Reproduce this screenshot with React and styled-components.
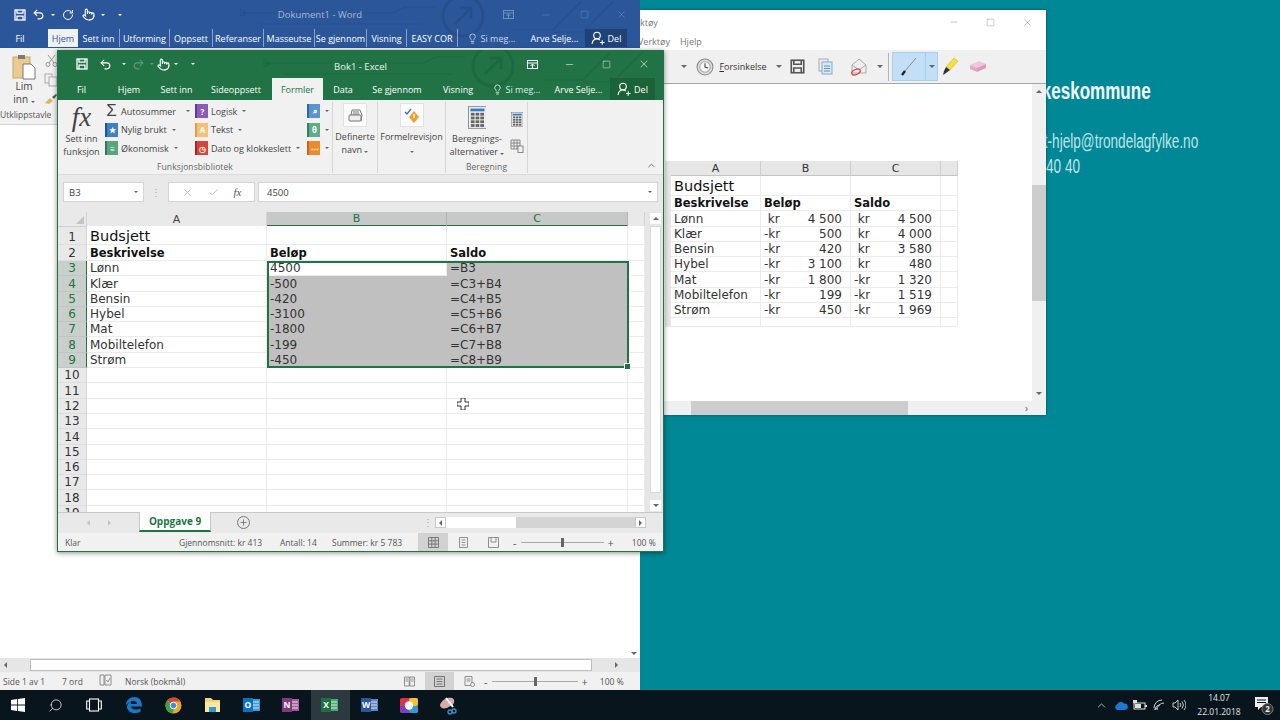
import React from 'react'
import styled, { createGlobalStyle } from 'styled-components'
import { Undo2, Redo2, RotateCw, Pointer, Lightbulb, X, Minus, Square, ChevronUp, Check, Plus, Search } from 'lucide-react'

const GREEN = '#217346'
const BLUE = '#2b579a'
const UI = '"Open Sans", "Noto Sans", sans-serif'
const SHEET = '"DejaVu Sans", Verdana, sans-serif'

const Global = createGlobalStyle`
    html, body { margin: 0; padding: 0; background: #018896; }
    * { box-sizing: border-box; }
`

const Desktop = styled.div`
    position: relative;
    width: 1280px;
    height: 720px;
    overflow: hidden;
    background: #018896;
    font-family: ${UI};
`
const Wallpaper = styled.div`
    display: flex;
    flex-direction: column;
    padding: 77px 0 0 1037px;
    font-family: "Liberation Sans", sans-serif;
`
const WallHeading = styled.div`
    font-size: 24px;
    font-weight: 700;
    line-height: 28px;
    color: #f4fbfb;
    margin-bottom: 24px;
    white-space: nowrap;
    transform: scaleX(0.71);
    transform-origin: left center;
`
const WallLine = styled.div`
    font-size: 20px;
    line-height: 25px;
    color: #bfe4e7;
    white-space: nowrap;
    margin-left: ${p => p.$ml || 0}px;
    transform: scaleX(0.68);
    transform-origin: left center;
`

/* ---------- windows ---------- */
const WordWindow = styled.div`
    position: absolute;
    left: 0;
    top: 0;
    width: 640px;
    height: 690px;
    display: flex;
    flex-direction: column;
    background: #fff;
    z-index: 2;
`
const ExcelWindow = styled.div`
    position: absolute;
    left: 57px;
    top: 50px;
    width: 607px;
    height: 502px;
    display: flex;
    flex-direction: column;
    background: #f1f1f1;
    border: 1px solid ${GREEN};
    border-top: 0;
    box-shadow: 0 1px 5px rgba(0,0,0,0.45);
    z-index: 3;
`
const SnipWindow = styled.div`
    position: absolute;
    left: 640px;
    top: 10px;
    width: 406px;
    height: 405px;
    display: flex;
    flex-direction: column;
    background: #fff;
    box-shadow: 0 0 3px rgba(0,0,0,0.4);
    z-index: 1;
`

/* ---------- office chrome ---------- */
const TitleBar = styled.div`
    position: relative;
    display: grid;
    grid-template-columns: 1fr auto 1fr;
    align-items: center;
    height: ${p => p.$h}px;
    flex: none;
`
const Qat = styled.div`
    display: flex;
    align-items: center;
    height: 100%;
    padding-left: ${p => p.$pad}px;
    color: ${p => p.$color || '#fff'};
`
const QatSlot = styled.span`
    width: ${p => p.$w}px;
    flex: none;
    display: flex;
    align-items: center;
    justify-content: center;
`
const DocTitle = styled.div`
    font-size: 9.5px;
    color: ${p => p.$color};
    white-space: nowrap;
    padding-top: ${p => p.$top || 0}px;
`
const WinControls = styled.div`
    display: flex;
    justify-content: flex-end;
    align-items: center;
    color: ${p => p.$color};
`
const WinControl = styled.div`
    width: ${p => p.$w}px;
    display: flex;
    justify-content: center;
    align-items: center;
`
const Circuit = styled.svg`
    position: absolute;
    right: 0;
    top: 0;
    pointer-events: none;
`
const TabRow = styled.div`
    display: flex;
    align-items: stretch;
    flex: none;
    height: ${p => p.$h}px;
    position: relative;
`
const Tab = styled.div`
    width: ${p => p.$w}px;
    flex: none;
    display: flex;
    align-items: center;
    justify-content: center;
    gap: 3px;
    font-size: ${p => p.$size || 9}px;
    white-space: nowrap;
    overflow: hidden;
    color: ${p => (p.$active ? p.$activeColor : p.$color || '#fff')};
    background: ${p => (p.$active ? '#f1f1f1' : p.$share ? p.$share : 'transparent')};
    border-right: ${p => (p.$sep ? '1px solid rgba(255,255,255,0.45)' : '0')};
`
const Caret = styled.span`
    display: inline-block;
    width: 0;
    height: 0;
    flex: none;
    margin-left: ${p => p.$ml ?? 2}px;
    border-left: 2px solid transparent;
    border-right: 2px solid transparent;
    border-top: 2px solid ${p => p.$color || '#666'};
`

/* ---------- word ---------- */
const WordHead = styled.div`
    background: ${BLUE};
    flex: none;
    height: 48px;
    display: flex;
    flex-direction: column;
`
const WordRibbon = styled.div`
    height: 77px;
    flex: none;
    background: #f1f1f1;
    border-bottom: 1px solid #d0d0d0;
    box-shadow: 0 1px 3px rgba(0,0,0,0.15);
`
const ClipGroup = styled.div`
    display: grid;
    grid-template-columns: 36px 18px;
    grid-template-rows: 1fr auto;
    width: 60px;
    height: 100%;
    padding: 6px 0 0 6px;
    font-size: 10px;
    line-height: 13px;
    color: #444;
`
const PasteButton = styled.div`
    display: flex;
    flex-direction: column;
    align-items: center;
`
const ClipTools = styled.div`
    display: flex;
    flex-direction: column;
    align-items: center;
    gap: 6px;
`
const ClipLabel = styled.div`
    grid-column: 1 / 3;
    margin: 0 0 3px -6px;
    font-size: 8.5px;
    color: #555;
    white-space: nowrap;
`
const WordBody = styled.div`
    flex: 1;
    display: flex;
    justify-content: flex-end;
    background: #fff;
`
const VScroll = styled.div`
    width: 13px;
    display: flex;
    flex-direction: column;
    justify-content: flex-end;
    align-items: center;
    padding-bottom: 3px;
    background: ${p => p.$bg || '#fff'};
`
const WordHScroll = styled.div`
    height: 14px;
    flex: none;
    display: flex;
    align-items: center;
    background: #e6e6e6;
    padding: 0 18px 0 4px;
`
const ScrollArrow = styled.span`
    flex: none;
    width: 0;
    height: 0;
    border-top: 3px solid transparent;
    border-bottom: 3px solid transparent;
    ${p => (p.$dir === 'left' ? 'border-right: 3px solid #666;' : 'border-left: 3px solid #666;')}
`
const ArrowDown = styled.span`
    width: 0;
    height: 0;
    flex: none;
    border-left: 3px solid transparent;
    border-right: 3px solid transparent;
    border-${p => (p.$up ? 'bottom' : 'top')}: 3px solid #666;
`
const WordThumb = styled.div`
    flex: none;
    width: 562px;
    height: 12px;
    margin: 0 23px 0 23px;
    background: #fff;
    border: 1px solid #bdbdbd;
`
const StatusBar = styled.div`
    height: ${p => p.$h}px;
    flex: none;
    display: flex;
    align-items: center;
    background: #f1f1f1;
    font-size: 8.5px;
    color: #555;
    padding-left: ${p => p.$pad}px;
    white-space: nowrap;
`
const StatusText = styled.span`
    width: ${p => p.$w}px;
    flex: none;
`
const ViewButton = styled.div`
    width: ${p => p.$w}px;
    height: 100%;
    flex: none;
    display: flex;
    align-items: center;
    justify-content: center;
    background: ${p => (p.$active ? '#d2d2d2' : 'transparent')};
`
const ZoomSlider = styled.div`
    width: ${p => p.$w}px;
    flex: none;
    height: 1px;
    background: #aaa;
    position: relative;
    margin: 0 4px;
`
const ZoomThumb = styled.span`
    position: absolute;
    left: 50%;
    top: -4px;
    width: 3px;
    height: 9px;
    margin-left: -1px;
    background: #666;
`
const ZoomSign = styled.span`
    font-size: 11px;
    line-height: 1;
    color: #555;
    flex: none;
`

/* ---------- excel ribbon ---------- */
const ExcelHead = styled.div`
    background: ${GREEN};
    flex: none;
`
const Ribbon = styled.div`
    display: flex;
    height: 75px;
    flex: none;
    position: relative;
    background: #f1f1f1;
    border-bottom: 1px solid #dcdcdc;
    color: #444;
    font-size: 9px;
`
const Group = styled.div`
    width: ${p => p.$w}px;
    flex: none;
    display: flex;
    flex-direction: column;
    border-right: 1px solid #d6d6d6;
    margin: 2px 0 1px;
`
const GroupBody = styled.div`
    flex: 1;
    display: flex;
    min-height: 0;
`
const GroupLabel = styled.div`
    height: 12px;
    flex: none;
    text-align: center;
    font-size: 8.5px;
    line-height: 12px;
    color: #666;
    letter-spacing: 0.1px;
`
const BigButton = styled.div`
    width: ${p => p.$w}px;
    flex: none;
    display: flex;
    flex-direction: column;
    align-items: center;
    padding-top: ${p => p.$top ?? 1}px;
    line-height: 13px;
    text-align: center;
    white-space: nowrap;
    color: #444;
`
const FxGlyph = styled.div`
    font-family: "Liberation Serif", serif;
    font-style: italic;
    font-size: 27px;
    line-height: 28px;
    color: #444;
    margin-bottom: 1px;
`
const IconBox = styled.div`
    width: 24px;
    height: 24px;
    background: #fbfbfb;
    border: 1px solid #e2e2e2;
    display: flex;
    align-items: center;
    justify-content: center;
    margin-bottom: 3px;
`
const SmallColumn = styled.div`
    display: flex;
    flex-direction: column;
    width: ${p => p.$w}px;
    flex: none;
    padding-top: 1px;
    gap: 2.5px;
`
const SmallItem = styled.div`
    height: 16px;
    display: flex;
    align-items: center;
    gap: 3px;
    white-space: nowrap;
`
const SideIcon = styled.div`
    height: 16px;
    margin-top: 8px;
    display: flex;
    align-items: center;
    justify-content: center;
`
const Book = styled.span`
    width: 13px;
    height: 14px;
    flex: none;
    display: inline-flex;
    align-items: center;
    justify-content: center;
    background: ${p => p.$color};
    border-left: 2px solid ${p => p.$dark};
    font-size: 8px;
    font-weight: 700;
    color: #fff;
`
const Sigma = styled.span`
    width: 13px;
    flex: none;
    text-align: center;
    font-size: 17px;
    line-height: 14px;
    color: #444;
    font-family: "Liberation Sans", sans-serif;
`
const Collapse = styled.div`
    position: absolute;
    right: 6px;
    bottom: 3px;
    color: #666;
    display: flex;
`

/* ---------- formula bar ---------- */
const FormulaBar = styled.div`
    height: 37px;
    flex: none;
    display: flex;
    align-items: flex-start;
    padding: 7px 5px 0 5px;
    background: #e9e9e9;
    font-size: 9.5px;
    color: #444;
`
const NameBox = styled.div`
    width: 81px;
    height: 20px;
    flex: none;
    background: #fff;
    border: 1px solid #d4d4d4;
    display: flex;
    align-items: center;
    justify-content: space-between;
    padding: 0 5px;
`
const Dots = styled.div`
    width: 24px;
    flex: none;
    height: 20px;
    display: flex;
    align-items: center;
    justify-content: center;
    color: #aaa;
`
const FxBox = styled.div`
    width: 87px;
    height: 20px;
    flex: none;
    background: #fff;
    border: 1px solid #d4d4d4;
    display: flex;
    align-items: center;
    justify-content: space-around;
    padding: 0 5px;
    color: #bbb;
`
const SmallFx = styled.span`
    font-family: "Liberation Serif", serif;
    font-style: italic;
    font-size: 11px;
    color: #555;
`
const FormulaInput = styled.div`
    flex: 1;
    height: 20px;
    margin-left: 3px;
    background: #fff;
    border: 1px solid #d4d4d4;
    display: flex;
    align-items: center;
    justify-content: space-between;
    padding: 0 5px 0 8px;
`

/* ---------- sheet ---------- */
const SheetArea = styled.div`
    flex: 1;
    display: flex;
    min-height: 0;
    background: #fff;
`
const Sheet = styled.div`
    width: 587px;
    flex: none;
    position: relative;
    overflow: hidden;
    font-family: ${SHEET};
    font-size: 12px;
    color: #333;
`
const HeaderRow = styled.div`
    display: grid;
    grid-template-columns: 29px 180px 180px 181px 1fr;
    height: 14px;
`
const Corner = styled.div`
    background: #e9e9e9;
    border-right: 1px solid #d4d4d4;
    border-bottom: 1px solid #cfcfcf;
    position: relative;
    &::after {
        content: '';
        position: absolute;
        right: 2px;
        bottom: 2px;
        border-left: 8px solid transparent;
        border-bottom: 8px solid #c4c4c4;
    }
`
const ColHead = styled.div`
    display: flex;
    align-items: center;
    justify-content: center;
    font-size: 11px;
    background: ${p => (p.$on ? '#c6c9c7' : '#e9e9e9')};
    color: ${p => (p.$on ? GREEN : '#444')};
    border-right: 1px solid ${p => (p.$on ? '#b5b5b5' : '#d4d4d4')};
    border-bottom: ${p => (p.$on ? `2px solid ${GREEN}` : '1px solid #cfcfcf')};
`
const SheetRow = styled.div`
    display: grid;
    grid-template-columns: 29px 180px 180px 181px 1fr;
    height: ${p => p.$h}px;
`
const RowHead = styled.div`
    display: flex;
    align-items: flex-end;
    justify-content: center;
    font-size: 12px;
    line-height: 14px;
    background: ${p => (p.$on ? '#c9d0cb' : '#e9e9e9')};
    color: ${p => (p.$on ? GREEN : '#333')};
    border-right: ${p => (p.$on ? `1px solid ${GREEN}` : '1px solid #d4d4d4')};
    border-bottom: 1px solid ${p => (p.$on ? '#c0c6c2' : '#dedede')};
`
const Cell = styled.div`
    display: flex;
    align-items: flex-end;
    padding: 0 3px 0 3px;
    line-height: 14px;
    white-space: nowrap;
    overflow: hidden;
    font-size: ${p => (p.$big ? '14.5px' : p.$bold ? '11.5px' : '12px')};
    ${p => p.$big && 'line-height: 16px;'}
    font-weight: ${p => (p.$bold ? 700 : 400)};
    color: ${p => (p.$bold || p.$big ? '#111' : '#333')};
    background: ${p => (p.$fill ? '#c0c0c0' : '#fff')};
    border-right: 1px solid ${p => (p.$fill ? '#c0c0c0' : '#ebebeb')};
    border-bottom: 1px solid ${p => (p.$fill ? '#c0c0c0' : '#ebebeb')};
`
const Selection = styled.div`
    position: absolute;
    left: 209px;
    top: 49px;
    width: 362px;
    height: 107px;
    border: 2px solid ${GREEN};
    pointer-events: none;
    &::after {
        content: '';
        position: absolute;
        right: -4px;
        bottom: -4px;
        width: 5px;
        height: 5px;
        background: ${GREEN};
        border: 1px solid #fff;
    }
`
const CursorMark = styled.svg`
    position: absolute;
    left: 399px;
    top: 186px;
`
const ExcelVScroll = styled.div`
    flex: 1;
    display: flex;
    flex-direction: column;
    align-items: center;
    background: #e6e6e6;
    padding: 1px 1px 1px 4px;
`
const ExcelVButton = styled.div`
    width: 11px;
    height: 11px;
    flex: none;
    background: #fff;
    display: flex;
    align-items: center;
    justify-content: center;
`
const ExcelVThumb = styled.div`
    width: 11px;
    flex: 1;
    background: #fdfdfd;
    border: 1px solid #d8d8d8;
    margin: 2px 0 7px;
`

/* ---------- sheet tabs ---------- */
const SheetTabs = styled.div`
    height: 21px;
    flex: none;
    display: flex;
    align-items: flex-start;
    background: #e9e9e9;
    border-top: 1px solid #c8c8c8;
    color: #bbb;
`
const TabNav = styled.div`
    width: 81px;
    flex: none;
    height: 100%;
    display: flex;
    align-items: center;
    justify-content: center;
    gap: 18px;
`
const NavArrow = styled.span`
    width: 0;
    height: 0;
    border-top: 3px solid transparent;
    border-bottom: 3px solid transparent;
    ${p => (p.$dir === 'left' ? 'border-right: 3px solid #c4c4c4;' : 'border-left: 3px solid #c4c4c4;')}
`
const SheetTab = styled.div`
    width: 72px;
    height: 20px;
    margin-top: -1px;
    flex: none;
    display: flex;
    align-items: center;
    justify-content: center;
    background: #fff;
    border: 1px solid #c8c8c8;
    border-top: 0;
    border-bottom: 2px solid ${GREEN};
    color: ${GREEN};
    font-size: 10px;
    font-weight: 700;
    white-space: nowrap;
`
const AddSheet = styled.div`
    width: 13px;
    height: 13px;
    margin: 3px 0 0 26px;
    flex: none;
    border: 1px solid #777;
    border-radius: 50%;
    color: #666;
    display: flex;
    align-items: center;
    justify-content: center;
`
const SplitDots = styled.div`
    margin: 1px 0 0 173px;
    width: 12px;
    flex: none;
    color: #aaa;
    font-size: 10px;
    line-height: 16px;
`
const HBar = styled.div`
    width: 211px;
    flex: none;
    margin: 4px 0 0 0;
    height: 11px;
    display: flex;
    align-items: stretch;
    background: #d4d4d4;
`
const HBarButton = styled.div`
    width: 11px;
    flex: none;
    background: #fff;
    border: 1px solid #c8c8c8;
    display: flex;
    align-items: center;
    justify-content: center;
`
const HBarThumb = styled.div`
    width: 70px;
    flex: none;
    background: #fff;
`
const HBarRest = styled.span`
    flex: 1;
`

/* ---------- snipping tool ---------- */
const SnipTitle = styled.div`
    height: 23px;
    flex: none;
    display: flex;
    align-items: center;
    justify-content: space-between;
    font-size: 9px;
    color: #777;
    padding-top: 1px;
`
const SnipMenu = styled.div`
    height: 17px;
    flex: none;
    display: flex;
    align-items: center;
    gap: 10px;
    font-size: 9px;
    color: #777;
    margin-left: -2px;
`
const SnipTools = styled.div`
    height: 34px;
    flex: none;
    display: flex;
    align-items: center;
    background: #f0f0f0;
    border-bottom: 1px solid #a6a6a6;
    font-size: 9px;
    color: #333;
`
const ToolSlot = styled.div`
    width: ${p => p.$w}px;
    flex: none;
    display: flex;
    align-items: center;
    justify-content: center;
    white-space: nowrap;
`
const PenButton = styled.div`
    width: 46px;
    height: 29px;
    flex: none;
    display: flex;
    background: #c3dff5;
    border: 1px solid #a8d0ee;
`
const PenPart = styled.div`
    width: ${p => p.$w}px;
    flex: none;
    display: flex;
    align-items: center;
    justify-content: center;
    border-left: ${p => (p.$sep ? '1px solid #a8d0ee' : '0')};
`
const ToolSep = styled.div`
    width: 1px;
    height: 28px;
    background: #b4b4b4;
    flex: none;
    margin: 0 3px 0 1px;
`
const SnipBody = styled.div`
    flex: 1;
    display: flex;
    min-height: 0;
`
const SnipCanvas = styled.div`
    flex: 1;
    padding: 77px 0 0 25px;
    background: #fff;
`
const SnipScroll = styled.div`
    width: 14px;
    flex: none;
    display: flex;
    flex-direction: column;
    align-items: center;
    background: #f0f0f0;
    padding: 6px 0;
`
const SnipThumb = styled.div`
    width: 100%;
    height: 116px;
    margin: 92px 0 auto;
    background: #cdcdcd;
`
const SnipHBar = styled.div`
    height: 14px;
    flex: none;
    display: flex;
    align-items: stretch;
    background: #f0f0f0;
`
const SnipHThumb = styled.div`
    width: 217px;
    margin-left: 51px;
    background: #cdcdcd;
`
const SnipHEnd = styled.div`
    flex: 1;
    display: flex;
    justify-content: flex-end;
    align-items: center;
    padding-right: 18px;
`
const ChevronText = styled.span`
    font-size: 10px;
    line-height: 1;
    color: #555;
`
const ShotGrid = styled.div`
    display: grid;
    grid-template-columns: 6px 90px 90px 90px 17px;
    font-family: ${SHEET};
    font-size: 12px;
    color: #333;
`
const ShotHead = styled.div`
    height: 15px;
    display: flex;
    align-items: center;
    justify-content: center;
    font-size: 11px;
    background: #e6e6e6;
    border-right: 1px solid #cfcfcf;
    border-bottom: 1px solid #c4c4c4;
`
const ShotStub = styled.div`
    background: #e6e6e6;
    height: ${p => p.$h}px;
`
const ShotCell = styled.div`
    height: ${p => p.$h}px;
    display: flex;
    align-items: flex-end;
    justify-content: ${p => (p.$money ? 'space-between' : 'flex-start')};
    padding: 0 8px 0 3px;
    line-height: 13px;
    white-space: pre;
    font-size: ${p => (p.$big ? '14.5px' : p.$bold ? '11.5px' : '12px')};
    ${p => p.$big && 'line-height: 18px;'}
    font-weight: ${p => (p.$bold ? 700 : 400)};
    color: ${p => (p.$bold || p.$big ? '#111' : '#333')};
    border-right: 1px solid #ebebeb;
    border-bottom: 1px solid #ebebeb;
`

/* ---------- taskbar ---------- */
const Taskbar = styled.div`
    position: absolute;
    left: 0;
    bottom: 0;
    width: 100%;
    height: 30px;
    display: flex;
    align-items: stretch;
    background: #08151c;
    color: #e8e8e8;
    z-index: 4;
`
const TaskCell = styled.div`
    width: ${p => p.$w || 39.3}px;
    flex: none;
    display: flex;
    align-items: center;
    justify-content: center;
    background: ${p => (p.$active ? '#2c393f' : 'transparent')};
`
const MirrorSearch = styled(Search)`
    transform: scaleX(-1);
`
const Tray = styled.div`
    margin-left: auto;
    display: flex;
    align-items: center;
`
const TrayIcon = styled.div`
    width: 19.5px;
    display: flex;
    align-items: center;
    justify-content: center;
`
const Clock = styled.div`
    width: 56px;
    text-align: center;
    font-size: 8.5px;
    line-height: 14px;
    color: #e4e4e4;
    margin-left: 2px;
`
const Notify = styled.div`
    width: 33px;
    height: 100%;
    display: flex;
    align-items: center;
    justify-content: center;
`

/* ---------- icons ---------- */
const Floppy = ({ color = '#fff', size = 12 }) => (
    <svg width={size} height={size} viewBox="0 0 12 12" fill="none" stroke={color} strokeWidth="1.3">
        <rect x="1" y="1" width="10" height="10" />
        <path d="M3 1v3.2h6V1M3 11V7.2h6V11" />
    </svg>
)
const ShareUser = ({ color = '#fff' }) => (
    <svg width="14" height="14" viewBox="0 0 14 14" fill="none" stroke={color} strokeWidth="1.1">
        <circle cx="6" cy="4.5" r="3.3" />
        <path d="M1 13c.4-3 2.4-5 5-5 1 0 2 .3 2.8 1M9 11.5h4.5M11.2 9.3v4.4" />
    </svg>
)
const RibbonDisplay = ({ color }) => (
    <svg width="11" height="9" viewBox="0 0 11 9" fill="none" stroke={color}>
        <rect x=".5" y=".5" width="10" height="8" />
        <path d="M.5 3h10M5.500 8V4M3.500 6l2-2 2 2" />
    </svg>
)
const CircuitArt = ({ w, ring, color }) => (
    <Circuit width={w} height="48" viewBox={`0 0 ${w} 48`} fill="none" stroke={color} strokeWidth="1.2">
        <circle cx={ring} cy="16" r="20" strokeWidth="3" />
        <path d={`M${ring - 8} 24L${ring + 8} 8M${ring - 3} 8h11v11`} strokeWidth="3" />
        <path d={`M0 13h${ring - 70}l12 -6h30M${ring + 50} 30h40l28 -28M${ring + 90} 32h30l30 -30M20 24h${ring - 60}`} />
        <circle cx="2" cy="13" r="3" />
    </Circuit>
)
const Clipboard = () => (
    <svg width="24" height="26" viewBox="0 0 24 26">
        <rect x="1" y="3" width="17" height="21" fill="#eccb93" stroke="#c9a66b" />
        <rect x="6" y="1" width="7" height="4" fill="#7a7a7a" />
        <path d="M11 10h8l4 4v11H11z" fill="#fff" stroke="#777" />
    </svg>
)
const Scissors = () => (
    <svg width="13" height="13" viewBox="0 0 13 13" fill="none" stroke="#999" strokeWidth="1">
        <circle cx="3" cy="10.5" r="2" /><circle cx="10" cy="10.5" r="2" />
        <path d="M4 9L10 1M9 9L3 1" />
    </svg>
)
const DocIcon = () => (
    <svg width="14" height="14" viewBox="0 0 14 14" fill="none" stroke="#aaa">
        <rect x="1" y="1" width="7" height="9" /><rect x="5" y="4" width="8" height="9" fill="#f1f1f1" />
    </svg>
)
const Brush = () => (
    <svg width="14" height="12" viewBox="0 0 14 12">
        <path d="M1 10l5-5 3 3-4 3z" fill="#e0b25e" /><path d="M8 4l4-3 1 1-3 4z" fill="#555" />
    </svg>
)
const NameIcon = () => (
    <svg width="17" height="17" viewBox="0 0 17 17" fill="none" stroke="#777">
        <rect x="2" y="8" width="12" height="6" rx="1" fill="#eee" />
        <path d="M4 8l1-5h8l2 5-1 6" /><path d="M6 5h6M5.500 7h7" />
    </svg>
)
const AuditIcon = () => (
    <svg width="18" height="18" viewBox="0 0 18 18">
        <path d="M2 6l2 2 4-5" fill="none" stroke="#3a78c2" strokeWidth="1.5" />
        <path d="M11 5l5 6-5 6-5-6z" fill="#f0a030" />
        <rect x="10.400" y="8" width="1.300" height="4" fill="#fff" />
    </svg>
)
const CalcIcon = ({ size = 24 }) => (
    <svg width={size * 0.82} height={size} viewBox="0 0 20 24">
        <rect x=".5" y=".5" width="19" height="23" fill="#f4f4f4" stroke="#888" />
        <rect x="2.500" y="2.500" width="15" height="3" fill="#3a78c2" />
        {[8, 12, 16, 20].map(y => [3, 8, 13].map(x => <rect key={x + '-' + y} x={x} y={y - 1} width="4" height="3" fill="#666" />))}
    </svg>
)
const SheetCalc = () => (
    <svg width="14" height="14" viewBox="0 0 14 14" fill="none" stroke="#888">
        <path d="M1 1h9v9H1zM1 4h9M1 7h9M4 1v9M7 1v9" /><rect x="8" y="7" width="5" height="6.500" fill="#f1f1f1" />
    </svg>
)
const GridIcon = ({ color = '#666' }) => (
    <svg width="11" height="11" viewBox="0 0 11 11" fill="none" stroke={color} strokeWidth=".8">
        <path d="M.5.5h10v10H.5zM.5 3.800h10M.5 7.100h10M3.800.5v10M7.100.5v10" />
    </svg>
)
const PageIcon = ({ color = '#777' }) => (
    <svg width="11" height="11" viewBox="0 0 11 11" fill="none" stroke={color} strokeWidth=".8">
        <path d="M1.500.5h8v10h-8zM3.500 3h4M3.500 5.500h4M3.500 8h4" />
    </svg>
)
const BreakIcon = () => (
    <svg width="11" height="11" viewBox="0 0 11 11" fill="none" stroke="#777" strokeWidth=".8">
        <path d="M.5.5h10v10H.5zM3 .5v4.500h5V.5" />
    </svg>
)
const ReadIcon = () => (
    <svg width="11" height="11" viewBox="0 0 11 11" fill="none" stroke="#777" strokeWidth=".8">
        <path d="M.5 1h4.700v9H.5zM5.800 1h4.700v9H5.800zM1.500 3h2.500M1.500 5h2.500M7 3h2.500M7 5h2.500" />
    </svg>
)
const LinesIcon = () => (
    <svg width="11" height="11" viewBox="0 0 11 11" fill="none" stroke="#666" strokeWidth=".9">
        <path d="M.5.5h10v10H.5zM2.500 3h6M2.500 5.500h6M2.500 8h6" />
    </svg>
)
const WebIcon = () => (
    <svg width="11" height="11" viewBox="0 0 11 11" fill="none" stroke="#777" strokeWidth=".8">
        <path d="M1 .5h7v9H1zM2.500 3h4M2.500 5h4" /><circle cx="8.500" cy="8.500" r="2" fill="#f1f1f1" />
    </svg>
)
const ProofIcon = () => (
    <svg width="13" height="12" viewBox="0 0 13 12" fill="none" stroke="#777" strokeWidth=".8">
        <path d="M1 1h4v10H1zM6 1h6v10H6zM7.500 6l1.500 2 2-4" />
    </svg>
)
const Clock3d = () => (
    <svg width="18" height="18" viewBox="0 0 17 17">
        <circle cx="8.500" cy="8.500" r="7.500" fill="#dcdcdc" stroke="#888" />
        <circle cx="8.500" cy="8.500" r="5" fill="#f6f6f6" stroke="#aaa" />
        <path d="M8.500 5v3.500l3 1" fill="none" stroke="#444" />
    </svg>
)
const CopyPage = () => (
    <svg width="15" height="17" viewBox="0 0 15 17" fill="none">
        <rect x="1" y="1" width="9" height="12" fill="#eee" stroke="#aaa" />
        <rect x="4" y="4" width="10" height="12" fill="#dcebf8" stroke="#7fa7cc" />
        <path d="M6 8h6M6 10.500h6M6 13h6" stroke="#5b8fc0" />
    </svg>
)
const SendMail = () => (
    <svg width="19" height="19" viewBox="0 0 19 19" fill="none">
        <path d="M2 8l7-6 7 6v8H2z" fill="#eee" stroke="#aaa" />
        <path d="M2 8l7 5 7-5" stroke="#aaa" />
        <ellipse cx="6" cy="15" rx="4.500" ry="2.500" transform="rotate(-25 6 15)" stroke="#d5404a" strokeWidth="1.200" />
    </svg>
)
const Pen = () => (
    <svg width="20" height="22" viewBox="0 0 20 22" fill="none">
        <path d="M17 2L6 15" stroke="#777" strokeWidth=".8" />
        <path d="M6 15l-3 4" stroke="#222" strokeWidth="2.400" />
    </svg>
)
const Marker = () => (
    <svg width="17" height="20" viewBox="0 0 17 20">
        <path d="M12 1l4 3-8 9-4-3z" fill="#f6e13c" stroke="#c2ad22" strokeWidth=".5" />
        <path d="M4 10l4 3-4 3-3 2 1-4z" fill="#333" />
    </svg>
)
const Eraser = () => (
    <svg width="18" height="13" viewBox="0 0 18 13">
        <path d="M1 5l9-4 7 3-9 4z" fill="#f1c5dc" />
        <path d="M1 5l7 3v4L1 9z" fill="#e2a8c8" /><path d="M8 8l9-4v4l-9 4z" fill="#d99bbd" />
    </svg>
)

const WindowsLogo = () => (
    <svg width="14" height="14" viewBox="0 0 14 14" fill="#fff">
        <path d="M0 2l6-.9V6.600H0zM6.800 1L14 0v6.600H6.800zM0 7.400h6v5.500L0 12zM6.800 7.400H14V14l-7.200-1z" />
    </svg>
)
const TaskView = () => (
    <svg width="16" height="14" viewBox="0 0 16 14" fill="none" stroke="#fff" strokeWidth="1.100">
        <rect x="3.500" y="1" width="9" height="12" /><path d="M3 3H.7v8H3M13 3h2.300v8H13" />
    </svg>
)
const Edge = () => (
    <svg width="18" height="18" viewBox="0 0 18 18" fill="none">
        <path d="M1 9c0-5 4-8 8-8 5 0 8 3 8 9.500H6c.3 3 5 4.300 9.500 1.700v3.600C10 18.800 1.500 17 2 10 3 7 5 6 6 6c0 0-.3 2 0 2h6c0-3.500-5-5-11 1z" fill="#1a78c8" />
    </svg>
)
const Chrome = () => (
    <svg width="17" height="17" viewBox="0 0 17 17">
        <circle cx="8.500" cy="8.500" r="8" fill="#e9a825" />
        <path d="M8.500.5a8 8 0 0 1 7 4H8.500a4 4 0 0 0-3.500 2L2.600 3A8 8 0 0 1 8.500.5z" fill="#d8443a" />
        <path d="M2.600 3L6 9c.8 1.400 2 2 3.500 2l-2.300 5.400A8 8 0 0 1 2.600 3z" fill="#3f9e50" />
        <circle cx="8.500" cy="8.500" r="3.300" fill="#4a8be0" stroke="#fff" />
    </svg>
)
const Folder = () => (
    <svg width="17" height="16" viewBox="0 0 17 16">
        <path d="M1 1h6l2 2h7v12H1z" fill="#f3d27c" />
        <rect x="1" y="5" width="15" height="10" fill="#fbe6a2" />
        <rect x="5" y="10" width="7" height="5" fill="#2f9bd6" />
    </svg>
)
const AppTile = ({ bg, page, letter }) => (
    <svg width="18" height="16" viewBox="0 0 18 16">
        <rect x="8" y="2" width="9" height="12" fill={page} />
        <path d="M10 5h6M10 8h6M10 11h6" stroke="#fff" strokeWidth=".8" />
        <rect x="0" y="1" width="10" height="14" fill={bg} />
        <text x="5" y="11" textAnchor="middle" fontSize="8.500" fontWeight="700" fill="#fff" fontFamily="Open Sans, sans-serif">{letter}</text>
    </svg>
)
const ColorApp = () => (
    <svg width="18" height="15" viewBox="0 0 18 15">
        <rect width="18" height="15" rx="2" fill="#d8334a" />
        <rect x="9" width="9" height="8" rx="2" fill="#f2c230" /><rect y="8" width="9" height="7" rx="2" fill="#7a3fc0" />
        <rect x="9" y="8" width="9" height="7" rx="2" fill="#2f9bd6" /><circle cx="9" cy="7.500" r="4.200" fill="#fff" />
    </svg>
)
const Snip = () => (
    <svg width="18" height="19" viewBox="0 0 18 19" fill="none">
        <path d="M1 9c2-6 8-8 12-7 3 1 3 5 0 7l-5 3C4 13 1 12 1 9z" fill="#d9a9a5" />
        <path d="M7 2l7 9" stroke="#fff" strokeWidth="2" />
        <circle cx="11" cy="16" r="2" stroke="#3a8fd0" strokeWidth="1.300" /><circle cx="15" cy="15" r="2" stroke="#3a8fd0" strokeWidth="1.300" />
    </svg>
)
const Cloud = () => (
    <svg width="14" height="9" viewBox="0 0 14 9"><path d="M3 9a3 3 0 0 1 0-5.500 4 4 0 0 1 7-1A3.200 3.200 0 0 1 11 9z" fill="#1c78d0" /></svg>
)
const Battery = () => (
    <svg width="14" height="10" viewBox="0 0 14 10" fill="#dfdfdf">
        <rect x="0" y="0" width="4" height="3" /><rect x="1" y="3" width="11" height="6" fill="none" stroke="#dfdfdf" /><rect x="2" y="4" width="6" height="4" /><rect x="12" y="5" width="2" height="2" />
    </svg>
)
const Wifi = () => (
    <svg width="13" height="12" viewBox="0 0 13 12" fill="none" stroke="#cfcfcf" strokeWidth="1">
        <path d="M2 11a2 2 0 0 1 2-2M2 11a5 5 0 0 1 5-5M1 9a8 8 0 0 1 8-8M4 11a7 7 0 0 1 7-7" />
    </svg>
)
const Speaker = () => (
    <svg width="14" height="12" viewBox="0 0 14 12" fill="none" stroke="#dfdfdf" strokeWidth=".9">
        <path d="M1 4h2l3-3v10L3 8H1zM8 4a3 3 0 0 1 0 4M10 2.500a5.500 5.500 0 0 1 0 7M12 1a8 8 0 0 1 0 10" />
    </svg>
)
const Balloon = () => (
    <svg width="20" height="19" viewBox="0 0 20 19">
        <path d="M1 1h13v10H7l-3 3v-3H1z" fill="#eee" />
        <path d="M3 4h9M3 6.500h9" stroke="#08151c" />
        <circle cx="13.500" cy="13" r="5.500" fill="#333" stroke="#777" />
        <text x="13.500" y="16" textAnchor="middle" fontSize="8" fontWeight="700" fill="#eee" fontFamily="Open Sans, sans-serif">2</text>
    </svg>
)

/* ---------- data ---------- */
const wordTabs = [
    ['Sett inn', 42], ['Utforming', 50], ['Oppsett', 43], ['Referanser', 51], ['Masseutse', 51],
    ['Se gjennom', 52], ['Visning', 40], ['EASY COR', 51],
]
const excelTabs = [
    ['Fil', 47], ['Hjem', 48], ['Sett inn', 47], ['Sideoppsett', 72], ['Formler', 51, true],
    ['Data', 40], ['Se gjennom', 68], ['Visning', 54],
]
const rows = [
    ['Budsjett', '', ''],
    ['Beskrivelse', 'Beløp', 'Saldo'],
    ['Lønn', '4500', '=B3'],
    ['Klær', '-500', '=C3+B4'],
    ['Bensin', '-420', '=C4+B5'],
    ['Hybel', '-3100', '=C5+B6'],
    ['Mat', '-1800', '=C6+B7'],
    ['Mobiltelefon', '-199', '=C7+B8'],
    ['Strøm', '-450', '=C8+B9'],
]
const shotRows = [
    ['Lønn', ' kr', '4 500', ' kr', '4 500'],
    ['Klær', '-kr', '500', ' kr', '4 000'],
    ['Bensin', '-kr', '420', ' kr', '3 580'],
    ['Hybel', '-kr', '3 100', ' kr', '480'],
    ['Mat', '-kr', '1 800', '-kr', '1 320'],
    ['Mobiltelefon', '-kr', '199', '-kr', '1 519'],
    ['Strøm', '-kr', '450', '-kr', '1 969'],
]
const rowHeight = n => (n === 1 ? 19 : n === 2 ? 16 : 15.3)

const App = () => {
    const rowNumbers = Array.from({ length: 19 }, (_, i) => i + 1)

    return (
        <Desktop>
            <Global />
            <Wallpaper>
                <WallHeading>lkeskommune</WallHeading>
                <WallLine>kt-hjelp@trondelagfylke.no</WallLine>
                <WallLine $ml={9}>40 40</WallLine>
            </Wallpaper>

            <SnipWindow>
                <SnipTitle>
                    <span>ktøy</span>
                    <WinControls $color="#777">
                        <WinControl $w={37}><Minus size={10} strokeWidth={1} /></WinControl>
                        <WinControl $w={37}><Square size={9} strokeWidth={1} /></WinControl>
                        <WinControl $w={37}><X size={11} strokeWidth={1} /></WinControl>
                    </WinControls>
                </SnipTitle>
                <SnipMenu>
                    <span>Verktøy</span>
                    <span>Hjelp</span>
                </SnipMenu>
                <SnipTools>
                    <ToolSlot $w={37} />
                    <ToolSlot $w={14}><ArrowDown /></ToolSlot>
                    <ToolSlot $w={27}><Clock3d /></ToolSlot>
                    <ToolSlot $w={50}><span><u>F</u>orsinkelse</span></ToolSlot>
                    <ToolSlot $w={22}><ArrowDown /></ToolSlot>
                    <ToolSlot $w={15}><Floppy color="#555" size={15} /></ToolSlot>
                    <ToolSlot $w={40}><CopyPage /></ToolSlot>
                    <ToolSlot $w={28}><SendMail /></ToolSlot>
                    <ToolSlot $w={14}><ArrowDown /></ToolSlot>
                    <ToolSep />
                    <PenButton>
                        <PenPart $w={32}><Pen /></PenPart>
                        <PenPart $w={12} $sep><ArrowDown /></PenPart>
                    </PenButton>
                    <ToolSlot $w={24}><Marker /></ToolSlot>
                    <ToolSlot $w={32}><Eraser /></ToolSlot>
                </SnipTools>
                <SnipBody>
                    <SnipCanvas>
                        <ShotGrid>
                            <ShotStub $h={15} />
                            <ShotHead>A</ShotHead>
                            <ShotHead>B</ShotHead>
                            <ShotHead>C</ShotHead>
                            <ShotHead />

                            <ShotStub $h={20} />
                            <ShotCell $h={20} $big>Budsjett</ShotCell>
                            <ShotCell $h={20} />
                            <ShotCell $h={20} />
                            <ShotCell $h={20} />

                            <ShotStub $h={15.3} />
                            <ShotCell $h={15.3} $bold>Beskrivelse</ShotCell>
                            <ShotCell $h={15.3} $bold>Beløp</ShotCell>
                            <ShotCell $h={15.3} $bold>Saldo</ShotCell>
                            <ShotCell $h={15.3} />

                            {shotRows.map(r => (
                                <React.Fragment key={r[0]}>
                                    <ShotStub $h={15.3} />
                                    <ShotCell $h={15.3}>{r[0]}</ShotCell>
                                    <ShotCell $h={15.3} $money><span>{r[1]}</span><span>{r[2]}</span></ShotCell>
                                    <ShotCell $h={15.3} $money><span>{r[3]}</span><span>{r[4]}</span></ShotCell>
                                    <ShotCell $h={15.3} />
                                </React.Fragment>
                            ))}
                            <ShotStub $h={9} />
                            <ShotCell $h={9} />
                            <ShotCell $h={9} />
                            <ShotCell $h={9} />
                            <ShotCell $h={9} />
                        </ShotGrid>
                    </SnipCanvas>
                    <SnipScroll>
                        <ArrowDown $up />
                        <SnipThumb />
                        <ArrowDown />
                    </SnipScroll>
                </SnipBody>
                <SnipHBar>
                    <SnipHThumb />
                    <SnipHEnd><ChevronText>›</ChevronText></SnipHEnd>
                </SnipHBar>
            </SnipWindow>

            <WordWindow>
                <WordHead>
                    <TitleBar $h={29}>
                        <CircuitArt w={400} ring={223} color="rgba(0,0,0,0.09)" />
                        <Qat $pad={13}>
                            <QatSlot $w={14}><Floppy /></QatSlot>
                            <QatSlot $w={22}><Undo2 size={13} /></QatSlot>
                            <QatSlot $w={8}><Caret $color="#fff" $ml={0} /></QatSlot>
                            <QatSlot $w={21}><RotateCw size={12} /></QatSlot>
                            <QatSlot $w={21}><Pointer size={13} /></QatSlot>
                            <QatSlot $w={7}><Caret $color="#fff" $ml={0} /></QatSlot>
                            <QatSlot $w={27}><Caret $color="#fff" $ml={0} /></QatSlot>
                        </Qat>
                        <DocTitle $color="#a9bcd9">Dokument1 - Word</DocTitle>
                        <WinControls $color="#6f8fc0">
                            <WinControl $w={38}><RibbonDisplay color="#6f8fc0" /></WinControl>
                            <WinControl $w={38}><Minus size={10} strokeWidth={1.2} /></WinControl>
                            <WinControl $w={38}><Square size={9} strokeWidth={1.2} /></WinControl>
                            <WinControl $w={37}><X size={11} strokeWidth={1.2} /></WinControl>
                        </WinControls>
                    </TitleBar>
                    <TabRow $h={18}>
                        <Tab $w={40}>Fil</Tab>
                        <Tab $w={8} />
                        <Tab $w={30} $active $activeColor={BLUE}>Hjem</Tab>
                        {wordTabs.map(([t, w]) => <Tab key={t} $w={w} $sep>{t}</Tab>)}
                        <Tab $w={66} $color="#c9d6ea"><Lightbulb size={11} />Si meg...</Tab>
                        <Tab $w={61}>Arve Selje...</Tab>
                        <Tab $w={42} $share="#1f4378"><ShareUser />Del</Tab>
                    </TabRow>
                </WordHead>
                <WordRibbon>
                    <ClipGroup>
                        <PasteButton>
                            <Clipboard />
                            <span>Lim</span>
                            <span>inn <Caret $ml={0} /></span>
                        </PasteButton>
                        <ClipTools>
                            <Scissors />
                            <DocIcon />
                            <Brush />
                        </ClipTools>
                        <ClipLabel>Utklippstavle</ClipLabel>
                    </ClipGroup>
                </WordRibbon>
                <WordBody>
                    <VScroll><ArrowDown /></VScroll>
                </WordBody>
                <WordHScroll>
                    <ScrollArrow $dir="left" />
                    <WordThumb />
                    <ScrollArrow $dir="right" />
                </WordHScroll>
                <StatusBar $h={18} $pad={3}>
                    <StatusText $w={59}>Side 1 av 1</StatusText>
                    <StatusText $w={37}>7 ord</StatusText>
                    <StatusText $w={26}><ProofIcon /></StatusText>
                    <StatusText $w={277}>Norsk (bokmål)</StatusText>
                    <ViewButton $w={15}><ReadIcon /></ViewButton>
                    <ViewButton $w={8} />
                    <ViewButton $w={29} $active><LinesIcon /></ViewButton>
                    <ViewButton $w={30}><WebIcon /></ViewButton>
                    <ZoomSign>-</ZoomSign>
                    <ZoomSlider $w={86}><ZoomThumb /></ZoomSlider>
                    <ZoomSign>+</ZoomSign>
                    <StatusText $w={12} />
                    <span>100 %</span>
                </StatusBar>
            </WordWindow>

            <ExcelWindow>
                <ExcelHead>
                    <TitleBar $h={28}>
                        <CircuitArt w={400} ring={230} color="rgba(0,0,0,0.09)" />
                        <Qat $pad={17}>
                            <QatSlot $w={14}><Floppy /></QatSlot>
                            <QatSlot $w={32}><Undo2 size={13} /></QatSlot>
                            <QatSlot $w={6}><Caret $color="#fff" $ml={0} /></QatSlot>
                            <QatSlot $w={22}><Redo2 size={13} color="#5d9c7a" /></QatSlot>
                            <QatSlot $w={6}><Caret $color="#5d9c7a" $ml={0} /></QatSlot>
                            <QatSlot $w={16}><Pointer size={13} /></QatSlot>
                            <QatSlot $w={10}><Caret $color="#fff" $ml={0} /></QatSlot>
                            <QatSlot $w={24}><Caret $color="#fff" $ml={0} /></QatSlot>
                        </Qat>
                        <DocTitle $color="#eaf3ee" $top={5}>Bok1 - Excel</DocTitle>
                        <WinControls $color="#fff">
                            <WinControl $w={37}><RibbonDisplay color="#fff" /></WinControl>
                            <WinControl $w={37}><Minus size={11} strokeWidth={1.2} /></WinControl>
                            <WinControl $w={37}><Square size={9} strokeWidth={1.2} /></WinControl>
                            <WinControl $w={38}><X size={12} strokeWidth={1.2} /></WinControl>
                        </WinControls>
                    </TitleBar>
                    <TabRow $h={22}>
                        {excelTabs.map(([t, w, on]) => <Tab key={t} $w={w} $active={on} $activeColor={GREEN}>{t}</Tab>)}
                        <Tab $w={62} $color="#dcebe3"><Lightbulb size={11} />Si meg...</Tab>
                        <Tab $w={63}>Arve Selje...</Tab>
                        <Tab $w={45} $share="#1b6239"><ShareUser />Del</Tab>
                    </TabRow>
                </ExcelHead>
                <Ribbon>
                    <Group $w={275}>
                        <GroupBody>
                            <BigButton $w={47}>
                                <FxGlyph>fx</FxGlyph>
                                <span>Sett inn</span>
                                <span>funksjon</span>
                            </BigButton>
                            <SmallColumn $w={90}>
                                <SmallItem><Sigma>Σ</Sigma>Autosummer<Caret $ml={7} /></SmallItem>
                                <SmallItem><Book $color="#3f7fc4" $dark="#1f568f">★</Book>Nylig brukt<Caret /></SmallItem>
                                <SmallItem><Book $color="#58a57e" $dark="#2f7a55">≡</Book>Økonomisk<Caret /></SmallItem>
                            </SmallColumn>
                            <SmallColumn $w={112}>
                                <SmallItem><Book $color="#8b5cb8" $dark="#64398f">?</Book>Logisk<Caret /></SmallItem>
                                <SmallItem><Book $color="#f2c27a" $dark="#dca04a">A</Book>Tekst<Caret /></SmallItem>
                                <SmallItem><Book $color="#d5453a" $dark="#a5281f">◷</Book>Dato og klokkeslett<Caret /></SmallItem>
                            </SmallColumn>
                            <SmallColumn $w={24}>
                                <SmallItem><Book $color="#5b93cf" $dark="#2f67a3">⌕</Book><Caret /></SmallItem>
                                <SmallItem><Book $color="#5fab8a" $dark="#347f5e">θ</Book><Caret /></SmallItem>
                                <SmallItem><Book $color="#ec8a2e" $dark="#c4651a">⋯</Book><Caret /></SmallItem>
                            </SmallColumn>
                        </GroupBody>
                        <GroupLabel>Funksjonsbibliotek</GroupLabel>
                    </Group>
                    <Group $w={45}>
                        <GroupBody>
                            <BigButton $w={44}>
                                <IconBox><NameIcon /></IconBox>
                                <span>Definerte</span>
                                <span>navn <Caret $ml={0} /></span>
                            </BigButton>
                        </GroupBody>
                        <GroupLabel />
                    </Group>
                    <Group $w={68}>
                        <GroupBody>
                            <BigButton $w={67}>
                                <IconBox><AuditIcon /></IconBox>
                                <span>Formelrevisjon</span>
                                <span><Caret $ml={0} /></span>
                            </BigButton>
                        </GroupBody>
                        <GroupLabel />
                    </Group>
                    <Group $w={82}>
                        <GroupBody>
                            <BigButton $w={62} $top={4}>
                                <CalcIcon size={23} />
                                <span style={{ marginTop: 3 }}>Beregnings-</span>
                                <span>alternativer <Caret $ml={0} /></span>
                            </BigButton>
                            <SmallColumn $w={18}>
                                <SideIcon><CalcIcon size={15} /></SideIcon>
                                <SideIcon><SheetCalc /></SideIcon>
                            </SmallColumn>
                        </GroupBody>
                        <GroupLabel>Beregning</GroupLabel>
                    </Group>
                    <Collapse><ChevronUp size={11} /></Collapse>
                </Ribbon>
                <FormulaBar>
                    <NameBox>B3<Caret $ml={0} /></NameBox>
                    <Dots>⋮</Dots>
                    <FxBox><X size={11} /><Check size={11} /><SmallFx>fx</SmallFx></FxBox>
                    <FormulaInput>4500<Caret $ml={0} /></FormulaInput>
                </FormulaBar>
                <SheetArea>
                    <Sheet>
                        <HeaderRow>
                            <Corner />
                            <ColHead>A</ColHead>
                            <ColHead $on>B</ColHead>
                            <ColHead $on>C</ColHead>
                            <ColHead />
                        </HeaderRow>
                        {rowNumbers.map(n => {
                            const r = rows[n - 1] || ['', '', '']
                            const selected = n >= 3 && n <= 9
                            return (
                                <SheetRow key={n} $h={rowHeight(n)}>
                                    <RowHead $on={selected}>{n}</RowHead>
                                    <Cell $big={n === 1} $bold={n === 2}>{r[0]}</Cell>
                                    <Cell $bold={n === 2} $fill={selected && n > 3}>{r[1]}</Cell>
                                    <Cell $bold={n === 2} $fill={selected}>{r[2]}</Cell>
                                    <Cell />
                                </SheetRow>
                            )
                        })}
                        <Selection />
                        <CursorMark width="12" height="12" viewBox="0 0 12 12">
                            <path d="M4 0h4v4h4v4H8v4H4V8H0V4h4z" fill="#fff" stroke="#333" />
                        </CursorMark>
                    </Sheet>
                    <ExcelVScroll>
                        <ExcelVButton><ArrowDown $up /></ExcelVButton>
                        <ExcelVThumb />
                        <ExcelVButton><ArrowDown /></ExcelVButton>
                    </ExcelVScroll>
                </SheetArea>
                <SheetTabs>
                    <TabNav><NavArrow $dir="left" /><NavArrow $dir="right" /></TabNav>
                    <SheetTab>Oppgave 9</SheetTab>
                    <AddSheet><Plus size={9} /></AddSheet>
                    <SplitDots>⋮</SplitDots>
                    <HBar>
                        <HBarButton><ScrollArrow $dir="left" /></HBarButton>
                        <HBarThumb />
                        <HBarRest />
                        <HBarButton><ScrollArrow $dir="right" /></HBarButton>
                    </HBar>
                </SheetTabs>
                <StatusBar $h={18} $pad={7}>
                    <StatusText $w={114}>Klar</StatusText>
                    <StatusText $w={101}>Gjennomsnitt: kr 413</StatusText>
                    <StatusText $w={52}>Antall: 14</StatusText>
                    <StatusText $w={86}>Summer: kr 5 783</StatusText>
                    <ViewButton $w={30} $active><GridIcon /></ViewButton>
                    <ViewButton $w={30}><PageIcon /></ViewButton>
                    <ViewButton $w={30}><BreakIcon /></ViewButton>
                    <StatusText $w={5} />
                    <ZoomSign>-</ZoomSign>
                    <ZoomSlider $w={83}><ZoomThumb /></ZoomSlider>
                    <ZoomSign>+</ZoomSign>
                    <StatusText $w={18} />
                    <span>100 %</span>
                </StatusBar>
            </ExcelWindow>

            <Taskbar>
                <TaskCell $w={35.5}><WindowsLogo /></TaskCell>
                <TaskCell><MirrorSearch size={15} strokeWidth={1.3} /></TaskCell>
                <TaskCell><TaskView /></TaskCell>
                <TaskCell><Edge /></TaskCell>
                <TaskCell><Chrome /></TaskCell>
                <TaskCell><Folder /></TaskCell>
                <TaskCell><AppTile bg="#0a72c4" page="#3a9ade" letter="O" /></TaskCell>
                <TaskCell><AppTile bg="#80397b" page="#a45ca0" letter="N" /></TaskCell>
                <TaskCell $active><AppTile bg="#1e7145" page="#4aa878" letter="X" /></TaskCell>
                <TaskCell><AppTile bg="#2b579a" page="#5b85c4" letter="W" /></TaskCell>
                <TaskCell><ColorApp /></TaskCell>
                <TaskCell><Snip /></TaskCell>
                <Tray>
                    <TrayIcon><ChevronUp size={13} strokeWidth={1.3} /></TrayIcon>
                    <TrayIcon><Cloud /></TrayIcon>
                    <TrayIcon><Battery /></TrayIcon>
                    <TrayIcon><Wifi /></TrayIcon>
                    <TrayIcon><Speaker /></TrayIcon>
                    <Clock>14.07<br />22.01.2018</Clock>
                    <Notify><Balloon /></Notify>
                </Tray>
            </Taskbar>
        </Desktop>
    )
}

export default App
